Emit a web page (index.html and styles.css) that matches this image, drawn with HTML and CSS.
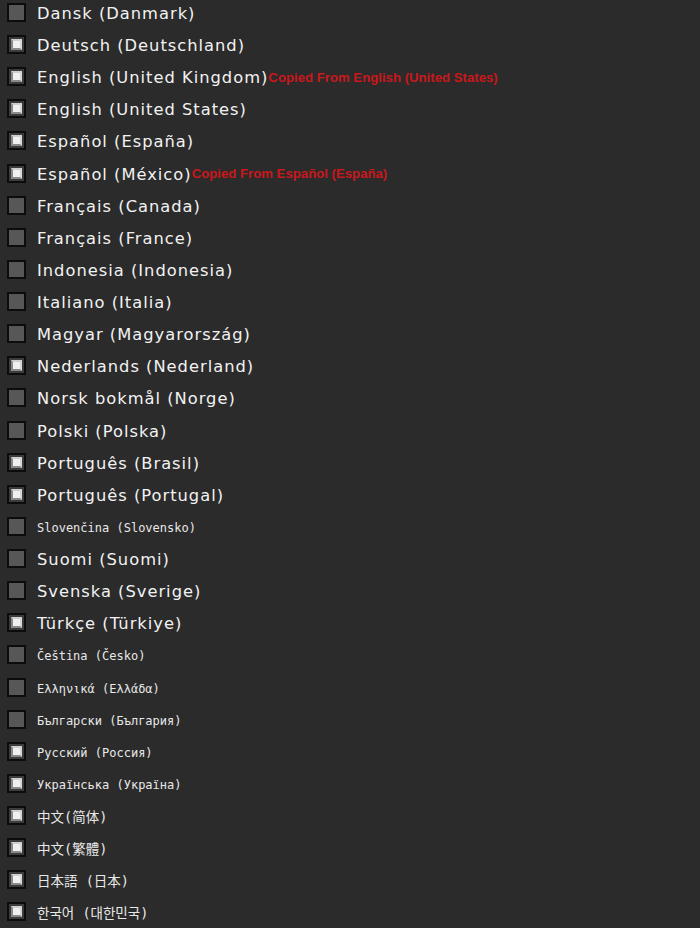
FILE: index.html
```html
<!DOCTYPE html>
<html>
<head>
<meta charset="utf-8">
<link rel="stylesheet" href="styles.css">
</head>
<body>
<ul class="langs">
  <li class="row"><span class="box"></span><span class="name">Dansk (Danmark)</span></li>
  <li class="row"><span class="box on"></span><span class="name">Deutsch (Deutschland)</span></li>
  <li class="row"><span class="box on"></span><span class="name">English (United Kingdom)</span><span class="note">Copied From English (United States)</span></li>
  <li class="row"><span class="box on"></span><span class="name">English (United States)</span></li>
  <li class="row"><span class="box on"></span><span class="name">Español (España)</span></li>
  <li class="row"><span class="box on"></span><span class="name">Español (México)</span><span class="note">Copied From Español (España)</span></li>
  <li class="row"><span class="box"></span><span class="name">Français (Canada)</span></li>
  <li class="row"><span class="box"></span><span class="name">Français (France)</span></li>
  <li class="row"><span class="box"></span><span class="name">Indonesia (Indonesia)</span></li>
  <li class="row"><span class="box"></span><span class="name">Italiano (Italia)</span></li>
  <li class="row"><span class="box"></span><span class="name">Magyar (Magyarország)</span></li>
  <li class="row"><span class="box on"></span><span class="name">Nederlands (Nederland)</span></li>
  <li class="row"><span class="box"></span><span class="name">Norsk bokmål (Norge)</span></li>
  <li class="row"><span class="box"></span><span class="name">Polski (Polska)</span></li>
  <li class="row"><span class="box on"></span><span class="name">Português (Brasil)</span></li>
  <li class="row"><span class="box on"></span><span class="name">Português (Portugal)</span></li>
  <li class="row"><span class="box"></span><span class="name small">Slovenčina (Slovensko)</span></li>
  <li class="row"><span class="box"></span><span class="name">Suomi (Suomi)</span></li>
  <li class="row"><span class="box"></span><span class="name">Svenska (Sverige)</span></li>
  <li class="row"><span class="box on"></span><span class="name">Türkçe (Türkiye)</span></li>
  <li class="row"><span class="box"></span><span class="name small">Čeština (Česko)</span></li>
  <li class="row"><span class="box"></span><span class="name small">Ελληνικά (Ελλάδα)</span></li>
  <li class="row"><span class="box"></span><span class="name small">Български (България)</span></li>
  <li class="row"><span class="box on"></span><span class="name small">Русский (Россия)</span></li>
  <li class="row"><span class="box on"></span><span class="name small">Українська (Україна)</span></li>
  <li class="row"><span class="box on"></span><span class="name cjk">中文(简体)</span></li>
  <li class="row"><span class="box on"></span><span class="name cjk tc">中文(繁體)</span></li>
  <li class="row"><span class="box on"></span><span class="name cjk jp">日本語 (日本)</span></li>
  <li class="row"><span class="box on"></span><span class="name cjk kr">한국어 (대한민국)</span></li>
</ul>
</body>
</html>
```
FILE: styles.css
```css
html, body {
  margin: 0;
  padding: 0;
  background: #2b2b2b;
  overflow: hidden;
}
.langs {
  list-style: none;
  margin: -3.6px 0 0 0;
  padding: 0 0 0 7px;
  display: flex;
  flex-direction: column;
}
.row {
  height: 32.14px;
  display: flex;
  align-items: center;
}
.box {
  position: relative;
  flex: none;
  width: 15px;
  height: 15px;
  border: 2px solid #0c0c0c;
  background: #575757;
  margin-right: 11px;
}
.box.on {
  background: #3c3c3c;
}
.box.on::after {
  content: "";
  position: absolute;
  left: 2px;
  top: 2px;
  width: 7px;
  height: 7px;
  background: #f0f0f0;
  border-style: solid;
  border-width: 2px;
  border-color: #cfcfcf #d8d8d8 #8a8a8a #8a8a8a;
}
.name {
  font-family: "DejaVu Sans", sans-serif;
  font-size: 16.3px;
  letter-spacing: 1px;
  color: #f2f2f2;
  white-space: nowrap;
  padding-top: 2px;
}
.name.small {
  font-family: "DejaVu Sans Mono", monospace;
  font-size: 12px;
  letter-spacing: 0;
  color: #e8e8e8;
  padding-top: 3px;
}
.name.cjk {
  font-family: "DejaVu Sans Mono", "Noto Sans CJK SC", monospace;
  font-size: 13.5px;
  letter-spacing: 0;
  color: #e8e8e8;
  padding-top: 1px;
}
.name.tc { font-family: "DejaVu Sans Mono", "Noto Sans CJK TC", monospace; }
.name.jp { font-family: "DejaVu Sans Mono", "Noto Sans CJK JP", monospace; }
.name.kr { font-family: "DejaVu Sans Mono", "Noto Sans CJK KR", monospace; }
.note {
  font-family: "Liberation Sans", sans-serif;
  font-weight: bold;
  font-size: 13.2px;
  color: #c8181c;
  white-space: nowrap;
  padding-top: 1px;
}
```
